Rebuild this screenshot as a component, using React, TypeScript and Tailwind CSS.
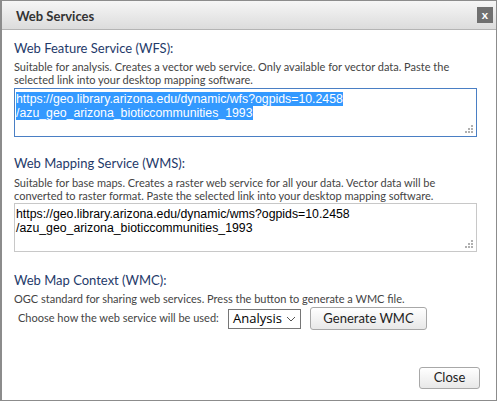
import React from 'react';

const wfsUrl = 'https://geo.library.arizona.edu/dynamic/wfs?ogpids=10.2458\n/azu_geo_arizona_bioticcommunities_1993';
const wmsUrl = 'https://geo.library.arizona.edu/dynamic/wms?ogpids=10.2458\n/azu_geo_arizona_bioticcommunities_1993';

const Grip: React.FC = () => (
    <svg className="absolute right-[3px] bottom-[3px]" width="8" height="8" viewBox="0 0 8 8">
        <rect x="6" y="0" width="2" height="2" fill="#b0b0b0" />
        <rect x="3" y="3" width="2" height="2" fill="#b0b0b0" />
        <rect x="6" y="3" width="2" height="2" fill="#b0b0b0" />
        <rect x="0" y="6" width="2" height="2" fill="#b0b0b0" />
        <rect x="3" y="6" width="2" height="2" fill="#b0b0b0" />
        <rect x="6" y="6" width="2" height="2" fill="#b0b0b0" />
    </svg>
);

const UrlBox: React.FC<{ url: string; selected?: boolean }> = ({ url, selected }) => {
    const [a, b] = url.split('\n');
    return (
        <div
            className={`relative h-[49px] bg-white px-px pt-[3px] text-[12.3px] leading-[14px] text-black border ${selected ? 'border-[#4a7fc4]' : 'border-[#c8c8c8]'}`}
            style={{ fontFamily: '"Liberation Sans", Arial, sans-serif' }}
        >
            <div>
                <span className={selected ? 'bg-[#3399ff] text-white' : ''}>{a}</span>
            </div>
            <div>
                <span className={selected ? 'bg-[#3399ff] text-white' : ''}>{b}</span>
            </div>
            <Grip />
        </div>
    );
};

export default function App() {
    return (
        <div
            className="w-[497px] h-[401px] bg-white border border-l-2 border-[#8c8c8c] flex flex-col text-[#444]"
            style={{ fontFamily: 'Lato, "Open Sans", sans-serif' }}
        >
            <header className="h-[29px] shrink-0 flex items-center justify-between pl-[14px] pr-[3px] bg-gradient-to-b from-[#f6f6f6] to-[#dcdcdc] border-b border-[#b4b4b4]">
                <h1 className="text-[13px] font-bold text-[#333] pt-[4px]">Web Services</h1>
                <button className="w-[16px] h-[16px] bg-[#707070] text-white text-[12px] font-bold leading-[14px] flex items-center justify-center">
                    x
                </button>
            </header>

            <main className="flex-1 flex flex-col px-[12px] pr-[19px]">
                <h2 className="mt-[10px] text-[13px] leading-[16px] text-[#1f3a6a]">Web Feature Service (WFS):</h2>
                <p className="mt-[4px] text-[11px] leading-[13px]">
                    Suitable for analysis. Creates a vector web service. Only available for vector data. Paste the selected link into your desktop mapping software.
                </p>
                <div className="mt-[2px]">
                    <UrlBox url={wfsUrl} selected />
                </div>

                <h2 className="mt-[18px] text-[13px] leading-[16px] text-[#1f3a6a]">Web Mapping Service (WMS):</h2>
                <p className="mt-[5px] text-[11px] leading-[13px]">
                    Suitable for base maps. Creates a raster web service for all your data. Vector data will be converted to raster format. Paste the selected link into your desktop mapping software.
                </p>
                <div className="mt-px">
                    <UrlBox url={wmsUrl} />
                </div>

                <h2 className="mt-[20px] text-[13px] leading-[16px] text-[#1f3a6a]">Web Map Context (WMC):</h2>
                <p className="mt-[4px] text-[11px] leading-[13px]">
                    OGC standard for sharing web services. Press the button to generate a WMC file.
                </p>
                <div className="mt-[2px] h-[23px] flex items-center text-[11px]">
                    <span className="ml-[4px] w-[208px]">Choose how the web service will be used:</span>
                    <div
                        className="ml-[2px] h-[20px] w-[73px] border border-[#767676] bg-white flex items-center justify-between pl-[4px] pr-[4px] text-[13px] text-black"
                        style={{ fontFamily: '"Open Sans", sans-serif' }}
                    >
                        <span>Analysis</span>
                        <svg width="10" height="6" viewBox="0 0 10 6">
                            <path d="M1 1 L5 5 L9 1" fill="none" stroke="#555" strokeWidth="1" />
                        </svg>
                    </div>
                    <button className="ml-[9px] h-[23px] w-[117px] rounded-[3px] border border-[#a8a8a8] bg-gradient-to-b from-white to-[#e8e8e8] text-[13px] text-[#222]">
                        Generate WMC
                    </button>
                </div>

                <div className="mt-auto mb-[11px] flex justify-end">
                    <button className="h-[22px] w-[61px] -mr-[3px] rounded-[3px] border border-[#a8a8a8] bg-gradient-to-b from-white to-[#e8e8e8] text-[13px] text-[#222]">
                        Close
                    </button>
                </div>
            </main>
        </div>
    );
}
